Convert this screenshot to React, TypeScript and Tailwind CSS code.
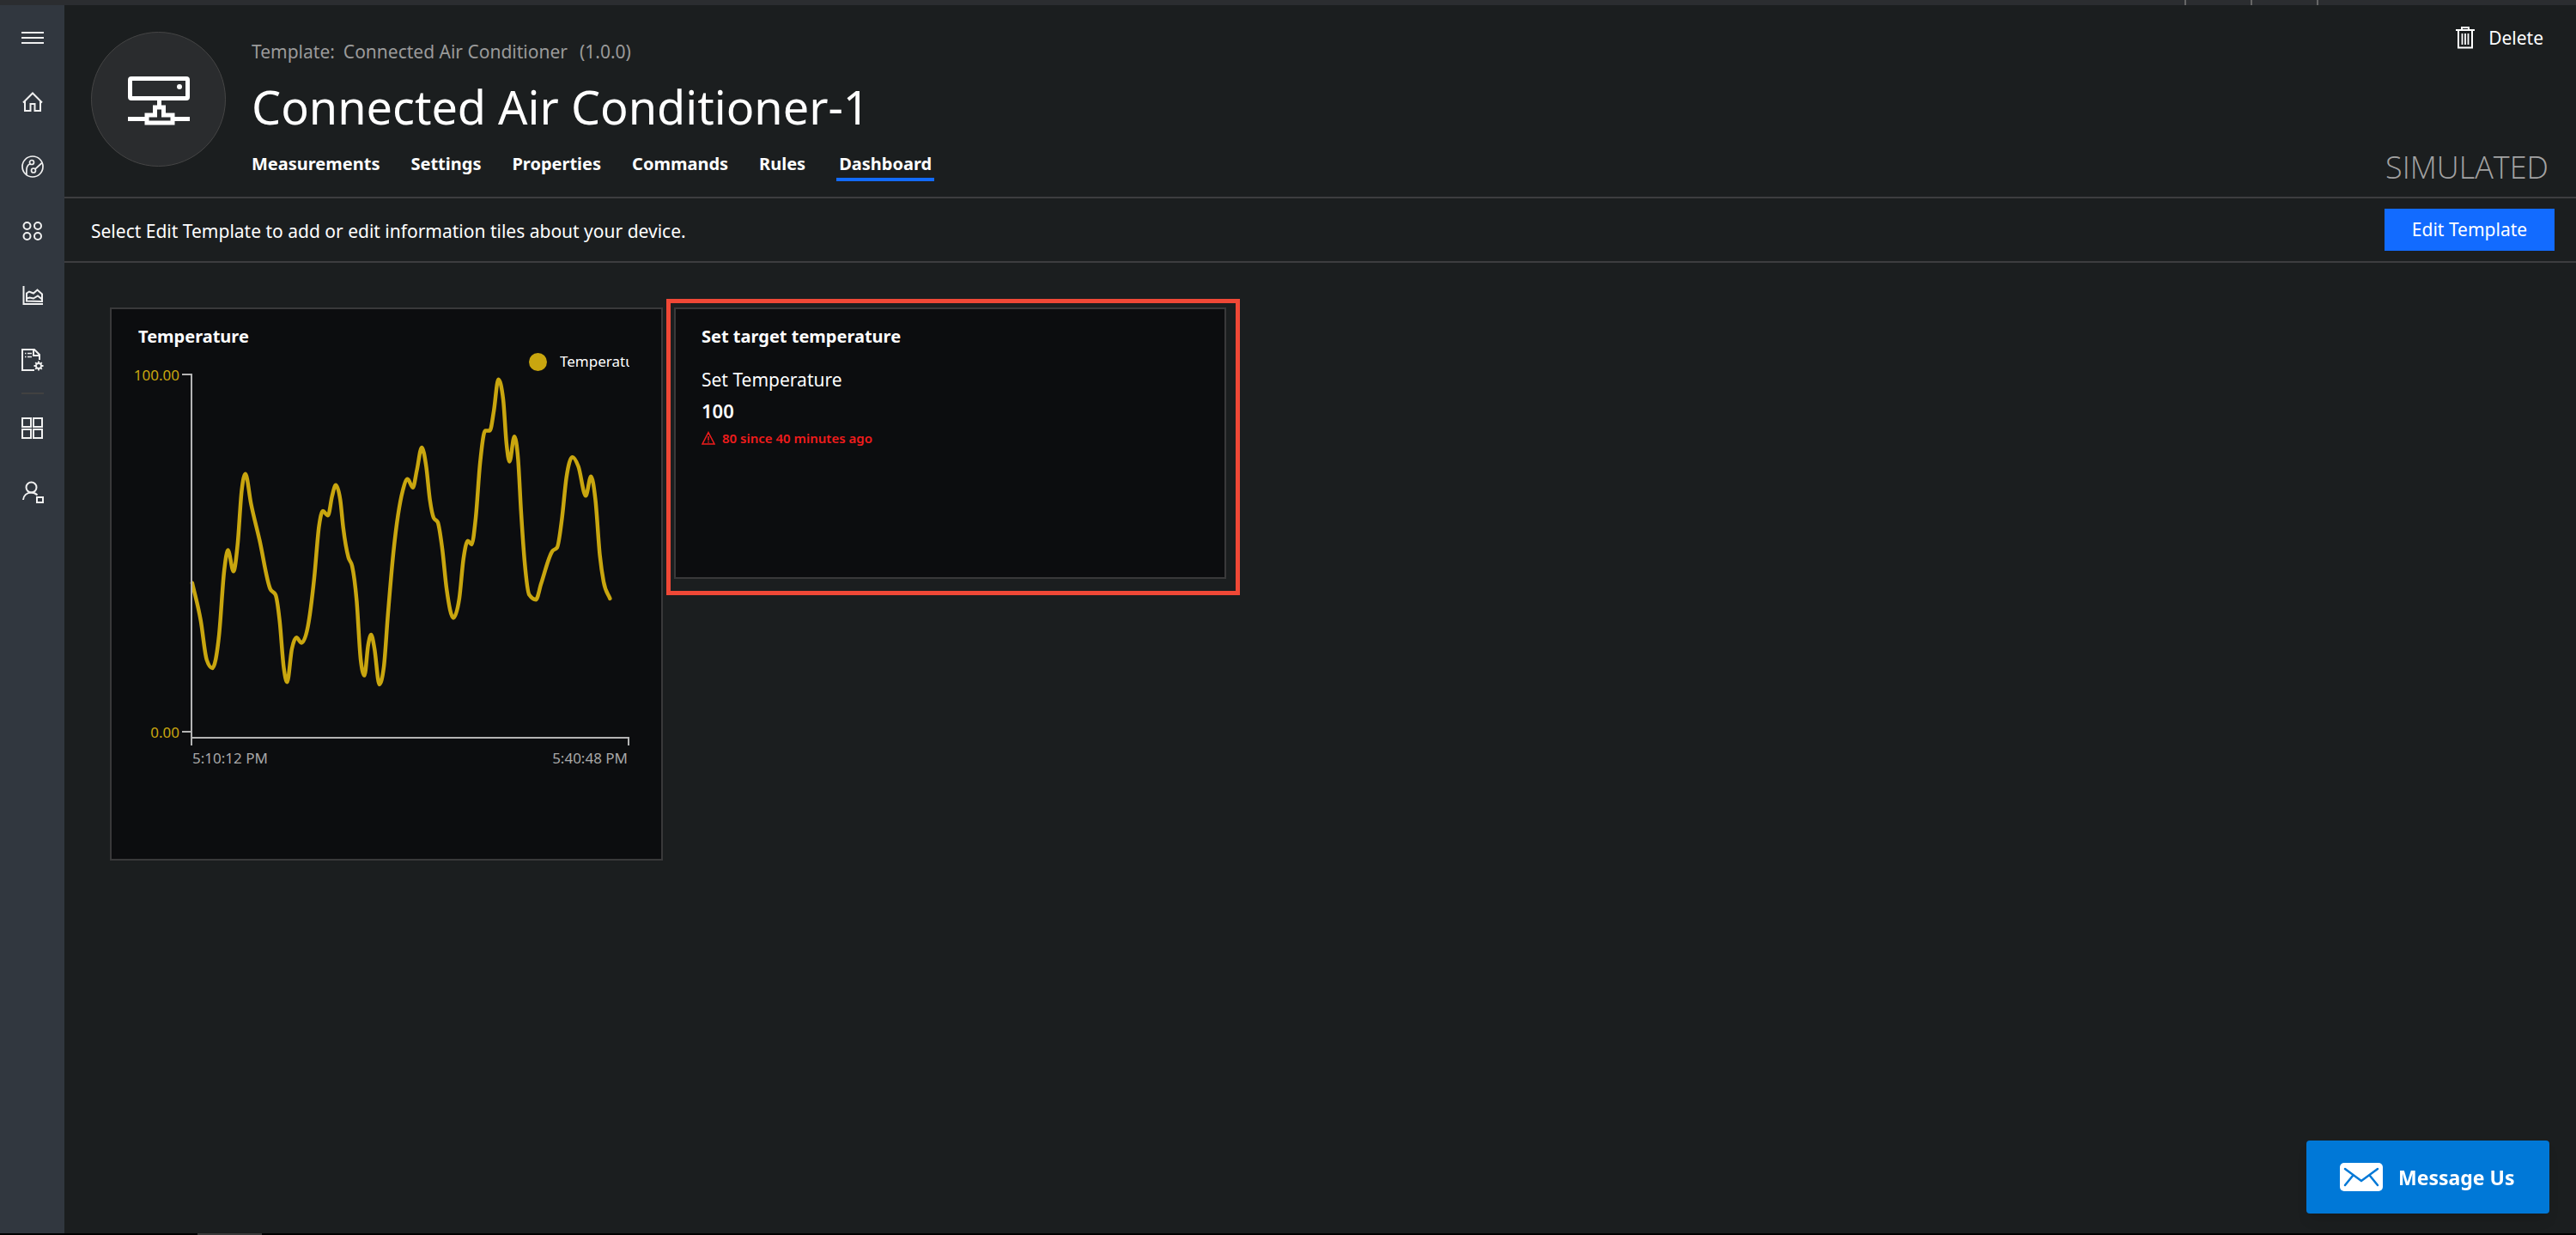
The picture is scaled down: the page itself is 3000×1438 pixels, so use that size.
import type { ReactNode } from "react";

type Point = [number, number];

// Plot area measured in chart units: 1175 wide (time) by 960 high (0.00 to 100.00).
const PLOT_UNITS = { width: 1175, height: 960 };
const PLOT = { left: 73, top: 12, width: 509, height: 416 };

const READINGS: Point[] = [
  [2, 400], [25, 298], [41, 193], [56, 171], [74, 258], [88, 433], [98, 488], [113, 431], [124, 503], [135, 648],
  [145, 693], [160, 613], [183, 515], [212, 383], [226, 368], [237, 298], [248, 173], [257, 133], [270, 223], [282, 253],
  [296, 239], [313, 283], [330, 413], [343, 553], [353, 593], [367, 581], [378, 633], [388, 663], [400, 623], [408, 548],
  [422, 468], [432, 445], [444, 353], [455, 193], [465, 151], [475, 233], [483, 261], [492, 223], [505, 127], [517, 173],
  [528, 313], [543, 483], [568, 648], [581, 679], [595, 656], [606, 703], [619, 764], [631, 713], [641, 623], [651, 575],
  [662, 563], [674, 493], [686, 383], [704, 306], [720, 358], [731, 463], [743, 513], [753, 503], [764, 573], [776, 723],
  [790, 809], [802, 809], [813, 863], [825, 947], [838, 893], [847, 773], [855, 726], [868, 793], [878, 733], [886, 593],
  [896, 453], [908, 368], [926, 355], [940, 398], [970, 485], [983, 495], [996, 573], [1008, 683], [1024, 738],
  [1040, 713], [1060, 634], [1074, 686], [1086, 623], [1098, 473], [1108, 403], [1125, 358],
];

// Monotone cubic interpolation, so the curve never overshoots its samples.
function monotonePath(points: Point[]): string {
  const last = points.length - 1;
  const width = points.slice(1).map(([x], i) => x - points[i][0]);
  const slope = points.slice(1).map(([, y], i) => (y - points[i][1]) / width[i]);
  const tangent = points.map((_, i) => {
    if (i === 0) return slope[0];
    if (i === last) return slope[last - 1];
    const a = slope[i - 1];
    const b = slope[i];
    const mean = (a * width[i] + b * width[i - 1]) / (width[i - 1] + width[i]);
    return (Math.sign(a) + Math.sign(b)) * Math.min(Math.abs(a), Math.abs(b), Math.abs(mean) / 2);
  });
  let d = `M${points[0][0]},${points[0][1]}`;
  for (let i = 0; i < last; i++) {
    const [x0, y0] = points[i];
    const [x1, y1] = points[i + 1];
    const h = width[i] / 3;
    d += `C${x0 + h},${y0 + h * tangent[i]} ${x1 - h},${y1 - h * tangent[i + 1]} ${x1},${y1}`;
  }
  return d;
}

const CURVE = monotonePath(
  READINGS.map(([x, y]): Point => [
    PLOT.left + (x / PLOT_UNITS.width) * PLOT.width,
    PLOT.top + PLOT.height - (y / PLOT_UNITS.height) * PLOT.height,
  ]),
);

function Icon({ children, size = 26 }: { children: ReactNode; size?: number }) {
  return (
    <svg width={size} height={size} viewBox={`0 0 ${size} ${size}`} fill="none" stroke="currentColor" strokeWidth="2" aria-hidden="true">
      {children}
    </svg>
  );
}

const MenuIcon = () => (
  <Icon>
    <path d="M0 7h26M0 13h26M0 19h26" />
  </Icon>
);

const HomeIcon = () => (
  <Icon>
    <path d="M2 13.500 13 2.500l11 11M4 12v11h6.500v-8h5v8H22V12" />
  </Icon>
);

const ExplorerIcon = () => (
  <Icon>
    <g strokeWidth="1.700">
      <circle cx="13" cy="13" r="12" />
      <circle cx="12" cy="8" r="2.500" />
      <circle cx="14" cy="17.500" r="2.500" />
      <path d="M10 9.800C6.500 11.500 5.500 13.500 6 22.500M16 15.800 24 8.500" />
    </g>
  </Icon>
);

const SetsIcon = () => (
  <Icon>
    <circle cx="6.500" cy="7" r="4" />
    <circle cx="19" cy="7" r="4" />
    <circle cx="6.500" cy="19" r="4" />
    <circle cx="19" cy="19" r="4" />
  </Icon>
);

const AnalyticsIcon = () => (
  <Icon>
    <path d="M2.500 2v21H25" />
    <path d="M6 19.500v-9l3-2 5 2 4.500-4 5.500 5v8.500z" />
    <path d="M6 16.500l3.500-1 4.500 1 5-3 5 4" />
  </Icon>
);

const JobsIcon = () => (
  <Icon>
    <path d="M15 25H1V1h14l6 6v6" />
    <path d="M14 1v7h7" />
    <path d="M4 5.500h1.500M7 5.500h5M4 9.500h1.500M7 9.500h5" strokeWidth="1.500" />
    <circle cx="20" cy="20" r="3" strokeWidth="1.800" />
    <path d="M20 14.500v2.500M20 23v2.500M14.500 20h2.500M23 20h2.500M16.200 16.200l1.700 1.700M22.100 22.100l1.700 1.700M23.800 16.200l-1.700 1.700M17.900 22.100l-1.700 1.700" strokeWidth="1.800" />
  </Icon>
);

const BuilderIcon = () => (
  <Icon>
    <path d="M1 2h10v10H1zM14 2h10v10H14zM1 15h10v10H1zM14 15h10v10H14z" />
  </Icon>
);

const AdminIcon = () => (
  <Icon>
    <circle cx="11.500" cy="7.500" r="6" />
    <path d="M2 22c.5-5 4-8.500 9.500-8.500 3 0 5 1 7 3" />
    <path d="M18 19h7v6h-7z" />
  </Icon>
);

function NavButton({ label, children }: { label: string; children: ReactNode }) {
  return (
    <button type="button" aria-label={label} className="flex h-[75px] w-full items-center justify-center text-[#f0f0f0]">
      {children}
    </button>
  );
}

function Sidebar() {
  return (
    <nav aria-label="Main" className="w-[75px] shrink-0 bg-[#31373f]">
      <NavButton label="Menu"><MenuIcon /></NavButton>
      <NavButton label="Home"><HomeIcon /></NavButton>
      <NavButton label="Device Explorer"><ExplorerIcon /></NavButton>
      <NavButton label="Device Sets"><SetsIcon /></NavButton>
      <NavButton label="Analytics"><AnalyticsIcon /></NavButton>
      <NavButton label="Jobs"><JobsIcon /></NavButton>
      <hr className="mx-auto my-px h-[2px] w-[26px] border-0 bg-[#414141]" />
      <NavButton label="Application Builder"><BuilderIcon /></NavButton>
      <NavButton label="Administration"><AdminIcon /></NavButton>
    </nav>
  );
}

const TABS = ["Measurements", "Settings", "Properties", "Commands", "Rules", "Dashboard"];

function DeviceHeader() {
  return (
    <header className="flex h-[225px] items-start border-b-2 border-[#3d3d3f] pr-8 pl-[31px]">
      <div className="mt-[31px] flex size-[157px] shrink-0 items-center justify-center rounded-full border border-[#454545] bg-[#2a2c2e] text-white">
        <svg width="72" height="60" viewBox="0 0 72 60" fill="none" stroke="currentColor" strokeWidth="5" aria-hidden="true">
          <rect x="2.500" y="5.500" width="67" height="23" rx="1.500" />
          <circle cx="60" cy="15" r="3" fill="currentColor" stroke="none" />
          <path d="M36.500 30v8M0 52.500h20M54 52.500h18M22 57V48h9.500v-9h10v9H52v9z" />
        </svg>
      </div>
      <div className="ml-[30px] flex-1">
        <p className="mt-10 flex text-[21px] leading-7 text-[#9a9a9a]">
          <span>Template:</span>
          <span className="ml-[10px]">Connected Air Conditioner</span>
          <span className="ml-[14px]">(1.0.0)</span>
        </p>
        <h1 className="mt-[14px] text-[54px] leading-[72px] text-white">Connected Air Conditioner-1</h1>
        <nav aria-label="Device" className="mt-[17px] flex gap-[34px] text-xl leading-7 font-bold text-white">
          {TABS.map((tab) => (
            <a
              key={tab}
              href={`#${tab.toLowerCase()}`}
              aria-current={tab === "Dashboard" ? "page" : undefined}
              className={tab === "Dashboard" ? "border-b-4 border-[#126bff] px-[3px] pb-0.5" : "border-b-4 border-transparent pr-[2px] pb-0.5"}
            >
              {tab}
            </a>
          ))}
        </nav>
      </div>
      <div className="flex h-full flex-col items-end justify-between">
        <button type="button" className="mt-6 mr-1.5 flex items-center gap-4 text-[21px] leading-7 text-white">
          <svg width="22" height="26" viewBox="0 0 22 26" fill="none" stroke="currentColor" strokeWidth="2" aria-hidden="true">
            <path d="M0 4h22M7 4V1h8v3M3 4v20.500h16V4" />
            <path d="M7.500 8v13M11 8v13M14.500 8v13" strokeWidth="1.800" />
          </svg>
          Delete
        </button>
        <p className="mb-2.5 font-['Open_Sans'] text-[36px] leading-[48px] font-light text-[#a3a3a3]">SIMULATED</p>
      </div>
    </header>
  );
}

function TemplateBar() {
  return (
    <div className="flex h-[75px] items-center justify-between border-b-2 border-[#3d3d3f] pr-[25px] pl-[31px] text-[21px] text-white">
      <p className="pt-1">Select Edit Template to add or edit information tiles about your device.</p>
      <button type="button" className="h-[49px] w-[198px] bg-[#126bff]">Edit Template</button>
    </div>
  );
}

function TemperatureTile() {
  return (
    <section className="mt-[10px] flex size-[644px] shrink-0 flex-col border-2 border-[#39393a] bg-[#0c0d0f]">
      <h2 className="mt-[18px] pl-[31px] text-xl leading-7 font-bold text-white">Temperature</h2>
      <div className="mt-px mr-[37px] flex h-7 items-center self-end">
        <span className="size-[21px] rounded-full bg-[#c9a60f]" />
        <span className="ml-[15px] w-[81px] overflow-hidden text-[17px] whitespace-nowrap text-white">Temperature</span>
      </div>
      <svg
        className="mt-[-11px] ml-5"
        width="590"
        height="480"
        viewBox="0 0 590 480"
        fill="none"
        role="img"
        aria-label="Temperature from 5:10:12 PM to 5:40:48 PM"
      >
        <path d={CURVE} stroke="#c9a60f" strokeWidth="4.500" strokeLinecap="round" strokeLinejoin="round" />
        <path d="M62 12H73V444M62 428H73M73 435H582V444" stroke="#b4b4b4" strokeWidth="2" />
        <g fill="#c9a60f" fontSize="17" textAnchor="end">
          <text x="59" y="19">100.00</text>
          <text x="59" y="435">0.00</text>
        </g>
        <g fill="#a8a8a8" fontSize="17">
          <text x="74" y="465">5:10:12 PM</text>
          <text x="581" y="465" textAnchor="end">5:40:48 PM</text>
        </g>
      </svg>
    </section>
  );
}

function TargetTile() {
  return (
    <div className="border-[5px] border-[#ef4836] pt-[5px] pr-[11px] pb-[14px] pl-1">
      <section className="h-[316px] w-[643px] border-2 border-[#39393a] bg-[#0c0d0f] pt-[18px] pl-[30px] text-white">
        <h2 className="text-xl leading-7 font-bold">Set target temperature</h2>
        <p className="mt-[22px] text-[21px] leading-7">Set Temperature</p>
        <p className="mt-2 text-[22px] leading-7 font-semibold">100</p>
        <p className="mt-1 flex items-center gap-2 text-[15px] leading-7 font-semibold text-[#f01c1c]">
          <svg width="16" height="16" viewBox="0 0 16 16" fill="none" stroke="currentColor" strokeWidth="1.500" aria-hidden="true">
            <path d="M8 1.500 15 15H1zM8 6v5M8 12v1.500" />
          </svg>
          80 since 40 minutes ago
        </p>
      </section>
    </div>
  );
}

export default function App() {
  return (
    <div className="flex min-h-screen flex-col bg-[#1b1e1f] font-['Noto_Sans',sans-serif]">
      <div className="flex h-1.5 justify-end gap-[75px] bg-[#2b2d30] pr-[300px]">
        <span className="w-[2px] bg-[#666666]" />
        <span className="w-[2px] bg-[#666666]" />
        <span className="w-[2px] bg-[#666666]" />
      </div>
      <div className="flex flex-1">
        <Sidebar />
        <main className="min-w-0 flex-1">
          <DeviceHeader />
          <TemplateBar />
          <div className="flex items-start gap-1 pt-[42px] pl-[53px]">
            <TemperatureTile />
            <TargetTile />
          </div>
        </main>
      </div>
      <div className="h-[2px] bg-black pl-[230px]">
        <div className="h-full w-[75px] bg-[#3a3a3a]" />
      </div>
      <button
        type="button"
        className="fixed right-[31px] bottom-[25px] flex h-[85px] w-[283px] items-center rounded bg-[#0078d7] pl-[39px] text-[23px] font-bold text-white shadow-lg"
      >
        <svg width="50" height="33" viewBox="0 0 50 33" fill="none" aria-hidden="true">
          <rect width="50" height="33" rx="5" fill="currentColor" />
          <path d="M6 7l19 14L44 7M6 26l9-11M44 26l-9-11" stroke="#0078d7" strokeWidth="2.500" strokeLinecap="round" />
        </svg>
        <span className="ml-[18px] pt-0.5">Message Us</span>
      </button>
    </div>
  );
}
